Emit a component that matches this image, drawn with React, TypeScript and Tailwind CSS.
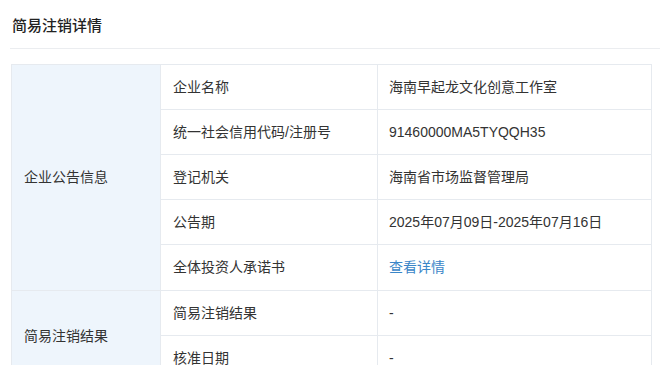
import React from "react";

const font = { fontFamily: '"Liberation Sans", "Noto Sans CJK SC", sans-serif' };

type Row = { label: string; value: string; link?: boolean };

const group1: Row[] = [
  { label: "企业名称", value: "海南早起龙文化创意工作室" },
  { label: "统一社会信用代码/注册号", value: "91460000MA5TYQQH35" },
  { label: "登记机关", value: "海南省市场监督管理局" },
  { label: "公告期", value: "2025年07月09日-2025年07月16日" },
  { label: "全体投资人承诺书", value: "查看详情", link: true },
];
const group2: Row[] = [
  { label: "简易注销结果", value: "-" },
  { label: "核准日期", value: "-" },
];

function Group({ title, rows, last }: { title: string; rows: Row[]; last?: boolean }) {
  return (
    <div className={`flex ${last ? "" : "border-b border-[#e6eaef]"}`}>
      <div className="w-[149px] shrink-0 bg-[#eef5fc] flex items-center pl-[12px] text-[14px] text-[#333] border-r border-[#e6eaef]">
        {title}
      </div>
      <div className="flex-1 flex flex-col">
        {rows.map((r, i) => (
          <div
            key={r.label}
            className={`flex h-[45px] ${i < rows.length - 1 ? "border-b border-[#e6eaef]" : ""}`}
          >
            <div className="w-[217px] shrink-0 flex items-center pl-[12px] text-[14px] text-[#333] border-r border-[#e6eaef]">
              {r.label}
            </div>
            <div
              className={`flex-1 flex items-center pl-[11px] text-[14px] ${
                r.link ? "text-[#3a86c8]" : "text-[#333]"
              }`}
            >
              {r.value}
            </div>
          </div>
        ))}
      </div>
    </div>
  );
}

export default function App() {
  return (
    <div className="w-[660px] h-[365px] overflow-hidden bg-white" style={font}>
      <div className="pl-[12px] pt-[15px] h-[48px] text-[15px] font-medium text-[#222]">
        简易注销详情
      </div>
      <div className="ml-[10px] h-px bg-[#ebedf0]" />
      <div className="mt-[15px] ml-[11px] w-[641px] border border-[#e6eaef]">
        <Group title="企业公告信息" rows={group1} />
        <Group title="简易注销结果" rows={group2} last />
      </div>
    </div>
  );
}
